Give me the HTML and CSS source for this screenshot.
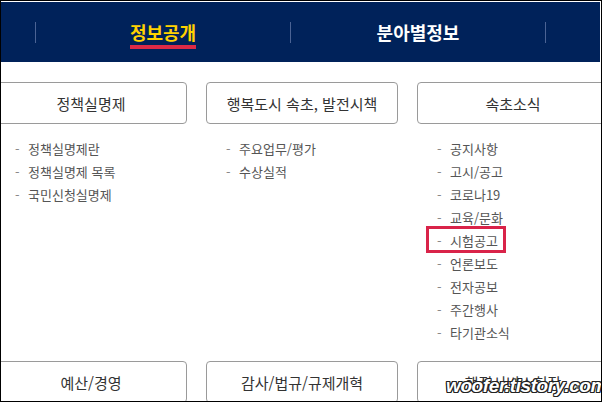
FILE: index.html
```html
<!DOCTYPE html>
<html lang="ko">
<head>
  <meta charset="UTF-8" />
  <meta name="viewport" content="width=device-width, initial-scale=1.0"/>
  <title>정보공개</title>
  <link rel="stylesheet" href="styles.css">
</head>
<body>

<div class="frame">
  <nav class="topnav">
    <span class="sep"></span>
    <a class="navcell"><span class="navtext active">정보공개</span></a>
    <span class="sep"></span>
    <a class="navcell"><span class="navtext">분아별정보</span></a>
    <span class="sep"></span>
  </nav>

  <div class="menu">
    <div class="boxtitle">정책실명제</div>
    <div class="boxtitle">행복도시 속초, 발전시책</div>
    <div class="boxtitle">속초소식</div>

    <ul class="links">
      <li>정책실명제란</li>
      <li>정책실명제 목록</li>
      <li>국민신청실명제</li>
    </ul>
    <ul class="links">
      <li>주요업무/평가</li>
      <li>수상실적</li>
    </ul>
    <ul class="links">
      <li>공지사항</li>
      <li>고시/공고</li>
      <li>코로나19</li>
      <li>교육/문화</li>
      <li><span class="marked">시험공고</span></li>
      <li>언론보도</li>
      <li>전자공보</li>
      <li>주간행사</li>
      <li>타기관소식</li>
    </ul>

    <div class="boxtitle">예산/경영</div>
    <div class="boxtitle">감사/법규/규제개혁</div>
    <div class="boxtitle">행정서비스헌장</div>
  </div>

  <div class="watermark">woofer.tistory.com</div>
</div>

</body>
</html>
```

FILE: styles.css
```css
body {
  margin: 0;
  background: #fff;
  font-family: "Noto Sans CJK KR", "Noto Sans", sans-serif;
}
.frame {
  position: relative;
  width: 602px;
  height: 402px;
  box-sizing: border-box;
  border: 1px solid #000;
  padding: 1px 1px 0 0;
  overflow: hidden;
  background: #fff;
}
.topnav {
  display: flex;
  align-items: center;
  height: 60px;
  background: #00225a;
  padding-left: 34px;
}
.sep {
  width: 1px;
  height: 21px;
  background: #4b6394;
  flex: none;
}
.navcell {
  width: 254px;
  flex: none;
  display: flex;
  justify-content: center;
}
.navtext {
  font-size: 18px;
  font-weight: bold;
  color: #fff;
  line-height: 22px;
  padding: 6px 0 2px;
  border-bottom: 4px solid transparent;
}
.navtext.active {
  color: #ffd200;
  border-bottom-color: #dc2a46;
}
.menu {
  display: grid;
  grid-template-columns: 192px 192px 192px;
  column-gap: 19px;
  margin: 20px 0 0 -6px;
}
.boxtitle {
  height: 42px;
  box-sizing: border-box;
  border: 1px solid #9a9a9a;
  border-radius: 4px;
  display: flex;
  align-items: center;
  justify-content: center;
  font-size: 15px;
  color: #333;
}
.links {
  list-style: none;
  margin: 0 0 17px;
  padding: 13px 0 0 20px;
  font-size: 13px;
  line-height: 23px;
  color: #555;
}
.links li::before {
  content: "-";
  display: inline-block;
  width: 13px;
  color: #888;
}
.marked {
  position: relative;
}
.marked::after {
  content: "";
  position: absolute;
  left: -24px;
  right: -8px;
  top: -5px;
  bottom: -3px;
  border: 3px solid #d92349;
}
.watermark {
  position: absolute;
  left: 445px;
  top: 374px;
  font-family: "Liberation Sans", sans-serif;
  font-size: 19px;
  font-weight: bold;
  font-style: italic;
  color: #fff;
  letter-spacing: -0.4px;
  text-shadow: 1px 0 #222, -1px 0 #222, 0 1px #222, 0 -1px #222,
    1px 1px #222, -1px -1px #222, 1px -1px #222, -1px 1px #222;
}
```
